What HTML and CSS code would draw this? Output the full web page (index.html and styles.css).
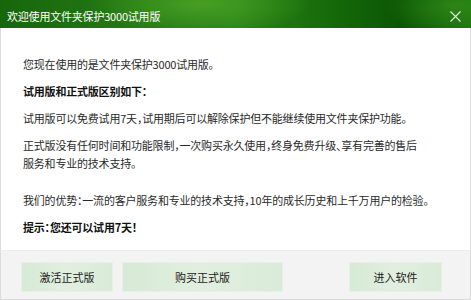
FILE: index.html
```html
<!DOCTYPE html>
<html lang="zh-CN">
<head>
<meta charset="utf-8">
<title>欢迎使用文件夹保护3000试用版</title>
<link rel="stylesheet" href="styles.css">
</head>
<body>
<div class="dialog">
  <div class="titlebar">
    <span class="title">欢迎使用文件夹保护3000试用版</span>
    <svg class="close" width="11" height="11" viewBox="0 0 11 11"><path d="M0.5 0.5 L10.5 10.5 M10.5 0.5 L0.5 10.5" stroke="#d8ecd0" stroke-width="1.2" fill="none"/></svg>
  </div>
  <div class="content">
    <p>您现在使用的是文件夹保护3000试用版。</p>
    <p class="strong">试用版和正式版区别如下：</p>
    <p>试用版可以免费试用7天，试用期后可以解除保护但不能继续使用文件夹保护功能。</p>
    <p class="gap">正式版没有任何时间和功能限制，一次购买永久使用，终身免费升级、享有完善的售后<br>服务和专业的技术支持。</p>
    <p>我们的优势：一流的客户服务和专业的技术支持，10年的成长历史和上千万用户的检验。</p>
    <p class="strong">提示：您还可以试用7天！</p>
  </div>
  <div class="footer">
    <button class="btn btn-activate">激活正式版</button>
    <button class="btn btn-buy">购买正式版</button>
    <button class="btn btn-enter">进入软件</button>
  </div>
</div>
</body>
</html>
```

FILE: styles.css
```css
html, body {
  margin: 0;
  padding: 0;
  width: 471px;
  height: 300px;
  overflow: hidden;
  background: #ffffff;
}
body {
  font-family: "Noto Sans CJK SC", "Liberation Sans", sans-serif;
  font-size: 11px;
}
.dialog {
  width: 471px;
  height: 300px;
  box-sizing: border-box;
  display: flex;
  flex-direction: column;
}
.titlebar {
  height: 28px;
  flex: none;
  display: flex;
  align-items: center;
  justify-content: space-between;
  padding: 4px 10px 0 7px;
  box-sizing: border-box;
  background:
    radial-gradient(ellipse 110px 30px at 200px 4px, rgba(80,170,40,0.75), rgba(80,170,40,0) 100%),
    radial-gradient(ellipse 70px 30px at 455px 6px, rgba(60,150,30,0.6), rgba(60,150,30,0) 100%),
    linear-gradient(90deg, #17660c 0%, #257a14 30%, #2a8418 50%, #166a0a 70%, #0b5604 85%, #1a720d 100%);
}
.title {
  color: #ffffff;
  font-size: 11px;
  line-height: 14px;
  letter-spacing: -0.2px;
}
.close {
  display: block;
}
.content {
  flex: 1;
  min-height: 0;
  overflow: hidden;
  border-left: 1px solid #dcdcdc;
  border-right: 1px solid #dcdcdc;
  padding: 27px 20px 0 22px;
  color: #2a2a2a;
  font-feature-settings: "halt";
  letter-spacing: -0.2px;
}
.content p {
  margin: 0 0 9px;
  line-height: 18px;
}
.content p.gap {
  margin-bottom: 19px;
}
.content p.strong {
  font-weight: bold;
  color: #111;
}
.footer {
  height: 50px;
  flex: none;
  box-sizing: border-box;
  background: #f3f3f3;
  border: 1px solid #dcdcdc;
  border-top: 1px solid #ececec;
  display: flex;
  align-items: flex-start;
  padding: 11px 0 0 20px;
}
.btn {
  height: 30px;
  border: none;
  padding: 0;
  font-family: inherit;
  font-size: 11px;
  color: #222;
  background: linear-gradient(90deg, #d6ead5 0%, #e2efe0 50%, #d9ebd8 100%);
  box-shadow: inset 0 0 0 1px #e6f0e4;
}
.btn-activate { width: 92px; }
.btn-buy { width: 161px; margin-left: 9px; }
.btn-enter { width: 93px; margin-left: 66px; }
```
